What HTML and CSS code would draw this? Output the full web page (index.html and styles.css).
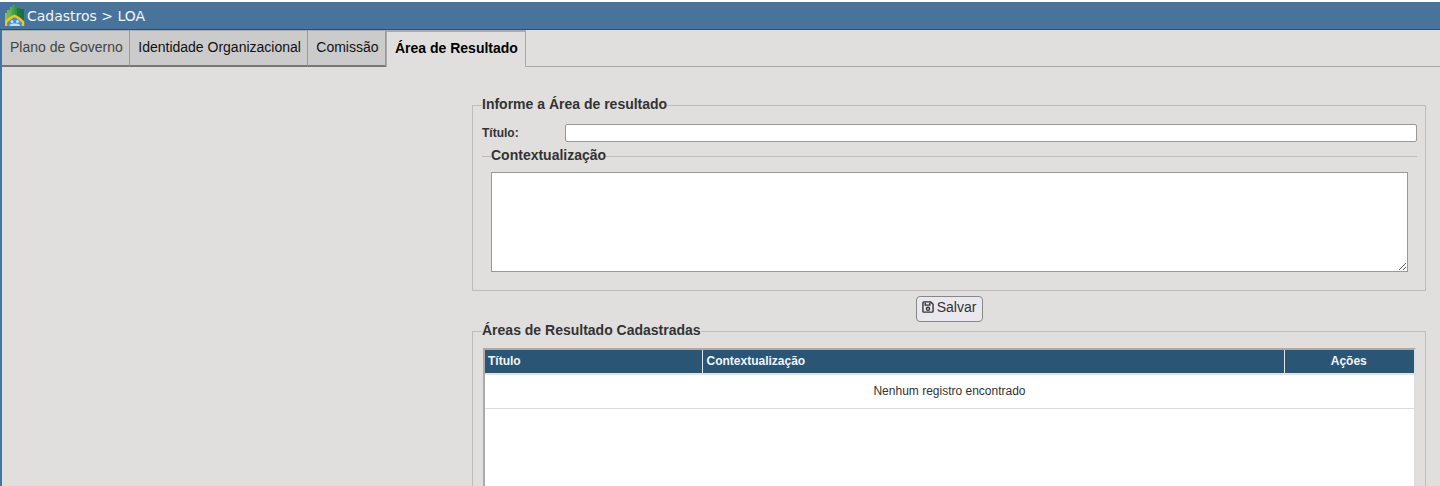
FILE: index.html
```html
<!DOCTYPE html>
<html lang="pt-BR">
<head>
<meta charset="utf-8">
<title>Cadastros &gt; LOA</title>
<link rel="stylesheet" href="styles.css">
</head>
<body>
<div class="app">
  <header class="topbar">
    <svg class="logo" width="20" height="21" viewBox="0 0 20 21">
      <rect x="0" y="8" width="2" height="9" fill="#8cc152"/>
      <rect x="2" y="5" width="3" height="11" fill="#6fb84a"/>
      <rect x="5" y="2" width="2" height="12" fill="#5cb347"/>
      <rect x="7" y="0" width="3" height="12" fill="#3fa04f"/>
      <rect x="10" y="1" width="2" height="11" fill="#2f8f4f"/>
      <rect x="12" y="3" width="3" height="11" fill="#1f7a4a"/>
      <rect x="15" y="4" width="4" height="13" fill="#1c6f48"/>
      <path d="M2 21C2 16 6 12 9.500 12C13 12 17 16 17 21Z" fill="#3f93d6"/>
      <path d="M1 21V17C4 14 7 11.500 9.500 11C12 11.500 15 14 18 17V21" fill="none" stroke="#f2c522" stroke-width="2.500"/>
      <circle cx="7" cy="16.500" r="1.500" fill="#bfe0f5"/>
      <circle cx="12.500" cy="16.500" r="1.500" fill="#bfe0f5"/>
      <path d="M4.500 21C4.500 19 7 18.500 9.500 18.500C12 18.500 15 19 15 21Z" fill="#bfe0f5"/>
    </svg>
    <span class="crumb">Cadastros &gt; LOA</span>
  </header>
  <nav class="tabs">
    <a class="tab tab-muted">Plano de Governo</a>
    <a class="tab">Identidade Organizacional</a>
    <a class="tab">Comissão</a>
    <a class="tab tab-active">Área de Resultado</a>
  </nav>
  <main class="content">
    <div class="column">
      <fieldset class="box box-form">
        <legend>Informe a Área de resultado</legend>
        <div class="field">
          <label class="field-label" for="titulo">Título:</label>
          <input class="field-input" id="titulo" type="text">
        </div>
        <fieldset class="inner">
          <legend>Contextualização</legend>
          <textarea class="area"></textarea>
        </fieldset>
      </fieldset>
      <div class="actions">
        <button class="btn" type="button">
          <svg class="btn-icon" width="12" height="12" viewBox="0 0 13 13" fill="none" stroke="#333" stroke-width="1.500">
            <path d="M2 1H9.500L12 3.500V11A1 1 0 0 1 11 12H2A1 1 0 0 1 1 11V2A1 1 0 0 1 2 1Z"/>
            <path d="M3.500 1.500V4.500H8.500V1.500"/>
            <circle cx="6.500" cy="8.500" r="1.700"/>
          </svg>
          <span>Salvar</span>
        </button>
      </div>
      <fieldset class="box box-list">
        <legend>Áreas de Resultado Cadastradas</legend>
        <div class="table-wrap">
          <table class="grid">
            <colgroup><col class="c1"><col class="c2"><col class="c3"></colgroup>
            <thead>
              <tr><th>Título</th><th>Contextualização</th><th class="center">Ações</th></tr>
            </thead>
            <tbody>
              <tr><td class="empty" colspan="3">Nenhum registro encontrado</td></tr>
            </tbody>
          </table>
        </div>
      </fieldset>
    </div>
  </main>
</div>
</body>
</html>
```
FILE: styles.css
```css
* { box-sizing: border-box; }
html, body { margin: 0; height: 100%; overflow: hidden; }
body {
  background: #fff;
  font-family: "Liberation Sans", Arial, sans-serif;
  color: #333;
}
.app {
  height: calc(100vh - 2px);
  margin-top: 2px;
  background: #e0dfdd;
  border-left: 2px solid #48749c;
}
.topbar {
  height: 28px;
  margin-left: -2px;
  background: #48749c;
  border-bottom: 1px solid #2f4f6a;
  display: flex;
  align-items: center;
  padding-left: 5px;
  gap: 2px;
}
.logo { flex: none; }
.crumb {
  font-family: "DejaVu Sans", sans-serif;
  font-size: 14px;
  color: #f2f5f8;
}
.tabs {
  height: 37px;
  display: flex;
  border-bottom: 1px solid #aaa;
  align-items: flex-start;
}
.tab {
  height: 37px;
  padding: 0 6.400px 0 8px;
  background: #cbcbcb;
  border-top: 1px solid #aaa;
  border-right: 1px solid #9a9a9a;
  border-bottom: 2px solid #777;
  font-size: 14px;
  line-height: 33px;
  color: #111;
}
.tab-muted { color: #444; }
.tab-active {
  background: #e0dfdd;
  border: 1px solid #aaa;
  border-top: 2px solid #aaa;
  border-bottom: 0;
  height: 37px;
  padding-right: 7px;
  font-weight: 700;
  color: #000;
}
.content { padding: 29px 0 0 470px; }
.column { width: 954px; }
fieldset { margin: 0; min-width: 0; }
legend {
  padding: 0 0 2px;
  font-size: 14px;
  font-weight: 700;
  color: #333;
  line-height: 16px;
}
.box {
  border: 1px solid #bcbcbc;
  padding: 0 8px;
}
.box-form { height: 195px; }
.box legend { margin-left: 1px; }
.field {
  display: flex;
  align-items: center;
  height: 18px;
  margin-top: 10px;
  margin-left: 1px;
}
.field-label {
  width: 83px;
  font-size: 12px;
  font-weight: 700;
}
.field-input {
  flex: 1;
  height: 18px;
  border: 1px solid #999;
  border-radius: 2px;
  background: #fff;
  padding: 0 2px;
}
.inner {
  border: 0;
  border-top: 1px solid #bcbcbc;
  padding: 0 9px;
  margin-top: 5px;
  margin-left: 1px;
}
.inner legend { margin-left: 0; }
.area {
  display: block;
  width: 917px;
  height: 100px;
  margin-top: 7px;
  border: 1px solid #999;
  background: #fff;
  resize: both;
  border-radius: 0;
}
.actions {
  display: flex;
  justify-content: center;
  margin-top: 5px;
  height: 26px;
}
.btn {
  width: 67px;
  height: 26px;
  padding: 0 0 4px;
  display: flex;
  align-items: center;
  justify-content: center;
  gap: 3px;
  background: #e8e8ee;
  border: 1px solid #888;
  border-radius: 4px;
  font-family: "Liberation Sans", Arial, sans-serif;
  font-size: 14px;
  color: #333;
}
.box-list {
  height: 180px;
}
.table-wrap {
  margin-top: 8px;
  margin-left: 2px;
  width: 933px;
  height: 200px;
  border-top: 2px solid #aaa;
  border-left: 2px solid #aaa;
  border-right: 2px solid #ddd;
  background: #fff;
}
.grid {
  width: 100%;
  border-collapse: collapse;
  table-layout: fixed;
}
.c1 { width: 217px; }
.c3 { width: 130px; }
.grid th {
  height: 24px;
  background: #2b5574;
  color: #f2f5f8;
  font-size: 12px;
  font-weight: 700;
  text-align: left;
  padding: 0 4px 1px;
  border-left: 1px solid #dfe4e8;
  border-bottom: 2px solid #dfe4e8;
}
.grid th:first-child { border-left: 0; padding-left: 3px; }
.grid th.center { text-align: center; padding: 0 4px 1px 3px; }
.empty {
  height: 34px;
  text-align: center;
  font-size: 12px;
  color: #333;
  border-bottom: 1px solid #ddd;
}
```
